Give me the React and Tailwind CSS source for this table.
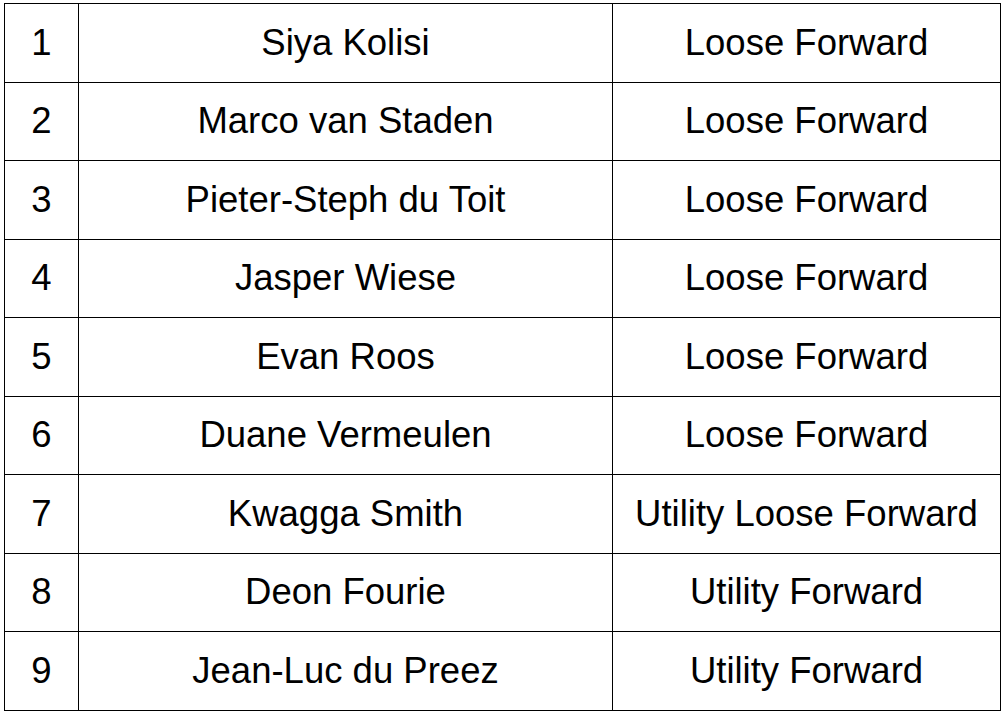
const players = [
  ['1', 'Siya Kolisi', 'Loose Forward'],
  ['2', 'Marco van Staden', 'Loose Forward'],
  ['3', 'Pieter-Steph du Toit', 'Loose Forward'],
  ['4', 'Jasper Wiese', 'Loose Forward'],
  ['5', 'Evan Roos', 'Loose Forward'],
  ['6', 'Duane Vermeulen', 'Loose Forward'],
  ['7', 'Kwagga Smith', 'Utility Loose Forward'],
  ['8', 'Deon Fourie', 'Utility Forward'],
  ['9', 'Jean-Luc du Preez', 'Utility Forward'],
];

export default function App() {
  return (
    <div className="w-[1002px] h-[714px] bg-white pl-[4px] pt-[3px]">
      <table
        className="w-[996px] border-collapse table-fixed text-black text-[36.5px] font-['Liberation_Sans',Arial,sans-serif]"
      >
        <colgroup>
          <col className="w-[74px]" />
          <col className="w-[534px]" />
          <col className="w-[388px]" />
        </colgroup>
        <tbody>
          {players.map(([num, name, pos]) => (
            <tr key={num} className="h-[78.56px]">
              <td className="border border-black text-center p-0 leading-none">{num}</td>
              <td className="border border-black text-center p-0 leading-none">{name}</td>
              <td className="border border-black text-center p-0 leading-none whitespace-nowrap">{pos}</td>
            </tr>
          ))}
        </tbody>
      </table>
    </div>
  );
}
